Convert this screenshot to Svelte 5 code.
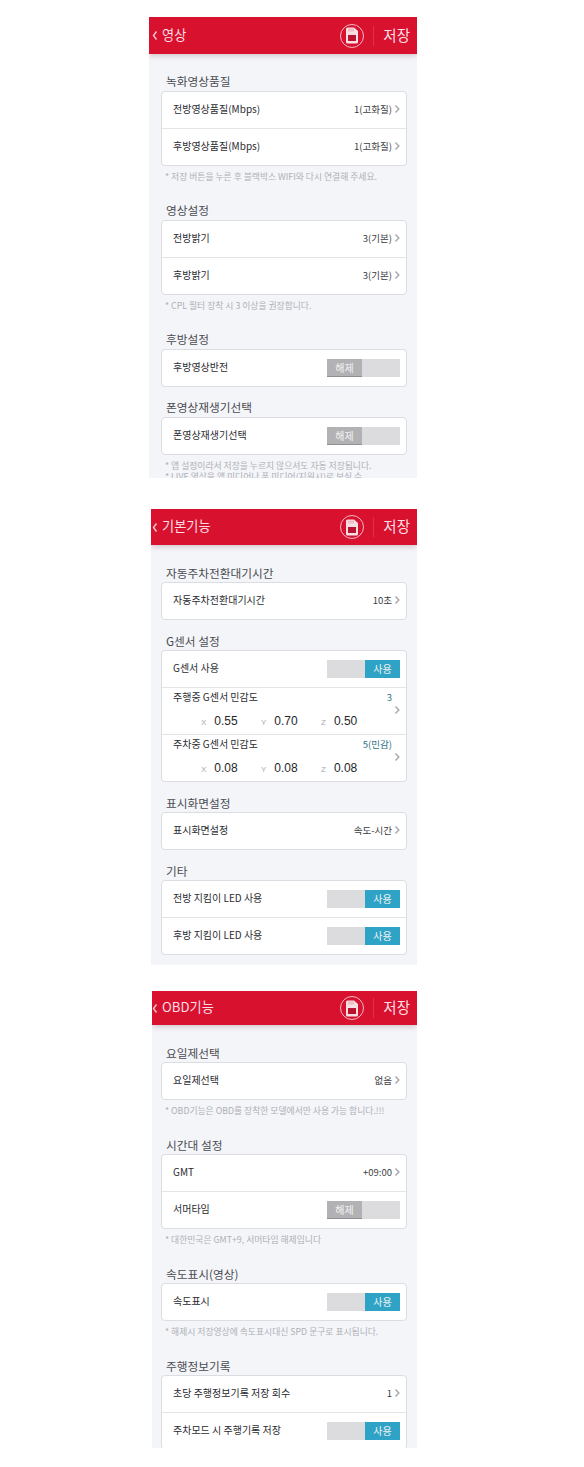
<script>
  const screens = [
    {
      title: '영상', cls: 'first',
      blocks: [
        { title: '녹화영상품질', rows: [
          { label: '전방영상품질(Mbps)', value: '1(고화질)' },
          { label: '후방영상품질(Mbps)', value: '1(고화질)' }
        ], notes: ['* 저장 버튼을 누른 후 블랙박스 WIFI와 다시 연결해 주세요.'] },
        { title: '영상설정', rows: [
          { label: '전방밝기', value: '3(기본)' },
          { label: '후방밝기', value: '3(기본)' }
        ], notes: ['* CPL 필터 장착 시 3 이상을 권장합니다.'] },
        { title: '후방설정', rows: [{ label: '후방영상반전', toggle: false }] },
        { title: '폰영상재생기선택', rows: [{ label: '폰영상재생기선택', toggle: false }], notes: [
          '* 앱 설정이라서 저장을 누르지 않으셔도 자동 저장됩니다.',
          '* LIVE 영상을 앱 미디어나 폰 미디어(지원시)로 보실 수'
        ] }
      ]
    },
    {
      title: '기본기능', cls: 'second',
      blocks: [
        { title: '자동주차전환대기시간', rows: [{ label: '자동주차전환대기시간', value: '10초' }] },
        { title: 'G센서 설정', rows: [
          { label: 'G센서 사용', toggle: true },
          { label: '주행중 G센서 민감도', value: '3', xyz: ['0.55', '0.70', '0.50'] },
          { label: '주차중 G센서 민감도', value: '5(민감)', xyz: ['0.08', '0.08', '0.08'] }
        ] },
        { title: '표시화면설정', rows: [{ label: '표시화면설정', value: '속도-시간' }] },
        { title: '기타', rows: [
          { label: '전방 지킴이 LED 사용', toggle: true },
          { label: '후방 지킴이 LED 사용', toggle: true }
        ] }
      ]
    },
    {
      title: 'OBD기능', cls: 'third',
      blocks: [
        { title: '요일제선택', rows: [{ label: '요일제선택', value: '없음' }], notes: ['* OBD기능은 OBD를 장착한 모델에서만 사용 가능 합니다.!!!'] },
        { title: '시간대 설정', rows: [
          { label: 'GMT', value: '+09:00' },
          { label: '서머타임', toggle: false }
        ], notes: ['* 대한민국은 GMT+9, 서머타임 해제입니다'] },
        { title: '속도표시(영상)', rows: [{ label: '속도표시', toggle: true }], notes: ['* 해제시 저장영상에 속도표시대신 SPD 문구로 표시됩니다.'] },
        { title: '주행정보기록', rows: [
          { label: '초당 주행정보기록 저장 회수', value: '1' },
          { label: '주차모드 시 주행기록 저장', toggle: true }
        ] }
      ]
    }
  ];
</script>

{#snippet chevron()}
  <svg class="chev" width="6" height="10" viewBox="0 0 6 10" aria-hidden="true">
    <path d="M1.500 1.500L4.800 5 1.500 8.500" fill="none" stroke="#a9abb0" stroke-width="1.500" />
  </svg>
{/snippet}

<div class="page">
  {#each screens as screen}
    <section class="screen {screen.cls}">
      <header class="bar">
        <svg class="back" width="6" height="11" viewBox="0 0 6 11" aria-hidden="true">
          <path d="M4.500 1.500L1.500 5.500l3 4" fill="none" stroke="#f6c9d1" stroke-width="1.400" />
        </svg>
        <span class="bar-title">{screen.title}</span>
        <span class="sd">
          <svg width="14" height="17" viewBox="0 0 14 17" aria-hidden="true">
            <path d="M2.500 0.500h6.500l4 3.500v11a1.500 1.500 0 0 1-1.500 1.500h-9a1.500 1.500 0 0 1-1.500-1.500v-13a1.500 1.500 0 0 1 1.500-1.500z" fill="#f8dfe3" />
            <path d="M4 1.500v3M6 1.500v3M8 1.500v3" stroke="#e58a99" stroke-width="0.800" />
            <rect x="3" y="8" width="8" height="6" fill="#b9132d" />
          </svg>
        </span>
        <span class="divider"></span>
        <span class="save">저장</span>
      </header>

      <div class="content">
        {#each screen.blocks as block}
          <div class="block">
            <h2>{block.title}</h2>
            <div class="card">
              {#each block.rows as row}
                {#if row.xyz}
                  <div class="row sens">
                    <div class="sens-main">
                      <div class="sens-top">
                        <span class="label">{row.label}</span>
                        <span class="value teal">{row.value}</span>
                      </div>
                      <div class="axes">
                        {#each ['X', 'Y', 'Z'] as axis, i}
                          <span class="axis"><small>{axis}</small>{row.xyz[i]}</span>
                        {/each}
                      </div>
                    </div>
                    {@render chevron()}
                  </div>
                {:else}
                  <div class="row">
                    <span class="label">{row.label}</span>
                    {#if row.value}
                      <span class="value">{row.value}</span>
                      {@render chevron()}
                    {:else if row.toggle}
                      <span class="toggle on"><b>사용</b></span>
                    {:else}
                      <span class="toggle"><b>해제</b></span>
                    {/if}
                  </div>
                {/if}
              {/each}
            </div>
            {#each block.notes ?? [] as note}
              <p class="note">{note}</p>
            {/each}
          </div>
        {/each}
      </div>
    </section>
  {/each}
</div>

<style>
  :global(body) {
    margin: 0;
    background: #fff;
  }

  .page {
    width: 584px;
    height: 1467px;
    overflow: hidden;
    padding-top: 17px;
    box-sizing: border-box;
    font-family: "Noto Sans CJK KR", "Noto Sans", sans-serif;
  }

  .screen {
    background: #f4f5f9;
    overflow: hidden;
    margin-left: auto;
    margin-right: 167px;
  }
  .first { width: 268px; height: 461px; }
  .second { width: 266px; height: 456px; margin-top: 31px; }
  .third { width: 265px; height: 457px; margin-top: 26px; }

  .bar {
    height: 36px;
    background: #d8112f;
    color: #fbdfe3;
    display: flex;
    align-items: center;
    padding: 0 7px 0 2px;
    box-shadow: 0 2px 5px rgba(120, 60, 70, 0.25);
    position: relative;
  }
  .first .bar { height: 37px; padding-left: 3px; }
  .second .bar { padding-left: 1px; }
  .third .bar { height: 34px; padding-left: 0; }

  .back { margin-right: 4px; }
  .bar-title {
    font-size: 13.200px;
    line-height: 20px;
    flex: 1;
    margin-top: -2px;
  }
  .sd {
    width: 22px;
    height: 22px;
    border: 1px solid #f7b9c3;
    border-radius: 50%;
    display: flex;
    align-items: center;
    justify-content: center;
  }
  .divider {
    width: 1px;
    height: 20px;
    background: #dd3049;
    margin: 0 9px;
  }
  .save {
    font-size: 14.500px;
    line-height: 20px;
    margin-top: -2px;
  }

  .first .content { padding: 0 10px 0 12px; }
  .second .content { padding: 0 10px; }
  .third .content { padding: 0 10px 0 9px; }

  .block { padding-top: 12px; }
  .block:first-child { padding-top: 19px; }
  .first .block { padding-top: 11px; }
  .first .block:first-child { padding-top: 18px; }
  .first .block:has(.note) + .block { padding-top: 19px; }
  .third .block:not(:first-child) { padding-top: 20px; }

  h2 {
    margin: 0 0 0 5px;
    font-size: 11.700px;
    line-height: 18px;
    height: 18px;
    font-weight: 400;
    color: #4a4c52;
  }
  .first h2 { margin-bottom: 1px; }

  .card {
    background: #fff;
    border: 1px solid #dcdde2;
    border-radius: 4px;
  }

  .row {
    height: 36px;
    display: flex;
    align-items: center;
    padding: 0 6px 0 11px;
  }
  .row + .row { border-top: 1px solid #e3e4e8; }
  .row.sens { height: 46px; }

  .label {
    font-size: 10px;
    margin-bottom: 3px;
    color: #2b2c30;
    flex: 1;
    white-space: nowrap;
  }
  .value {
    font-size: 9.500px;
    margin-bottom: 3px;
    color: #3c3d42;
  }
  .value.teal { color: #2d7186; }
  .chev {
    margin: 0 0 2px 2px;
    flex: none;
  }

  .sens-main { flex: 1; }
  .sens-top {
    display: flex;
    align-items: center;
    line-height: 14px;
    height: 14px;
    margin-top: -2px;
  }
  .sens-top .label, .sens-top .value { margin-bottom: 0; }
  .axes {
    display: flex;
    margin-top: 10px;
    padding-left: 28px;
    line-height: 14px;
  }
  .axis {
    width: 60px;
    font-size: 12px;
    color: #25262a;
    font-family: "Liberation Sans", sans-serif;
  }
  .axis small {
    font-size: 8px;
    color: #a8aab0;
    margin-right: 8px;
  }

  .toggle {
    width: 73px;
    height: 18px;
    background: #dcdcdf;
    display: flex;
    flex: none;
  }
  .toggle b {
    width: 35px;
    font-size: 10px;
    line-height: 17px;
    font-weight: 400;
    text-align: center;
    color: #f3f3f3;
    background: #b2b2b4;
    border-bottom: 1px solid #8f9094;
    box-sizing: border-box;
  }
  .toggle.on { justify-content: flex-end; }
  .toggle.on b {
    background: #2fa3c6;
    border-bottom: 0;
    line-height: 18px;
  }

  .note {
    margin: 5px 0 0 4px;
    font-size: 8.800px;
    line-height: 11px;
    color: #aeb0b6;
    white-space: nowrap;
  }
  .note + .note { margin-top: 0; }
</style>
